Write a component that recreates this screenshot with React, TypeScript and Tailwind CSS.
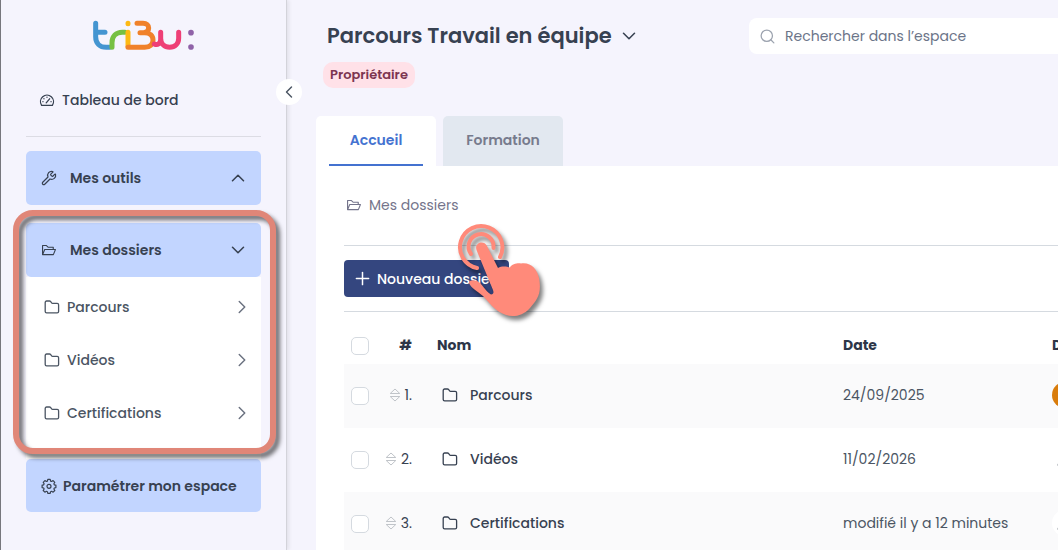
import React, { useState } from 'react';
import { ChevronDown, ChevronLeft, ChevronRight, ChevronUp, Plus, Search, Wrench } from 'lucide-react';
import { AiOutlineFolderOpen } from 'react-icons/ai';
import { BsPersonFill } from 'react-icons/bs';

interface Folder {
  id: number;
  name: string;
  date: string;
  avatar: string;
}

const folders: Folder[] = [
  { id: 1, name: 'Parcours', date: '24/09/2025', avatar: 'bg-[#d97c0b] text-[#d97c0b]' },
  { id: 2, name: 'Vidéos', date: '11/02/2026', avatar: 'bg-white text-[#4b5563]' },
  { id: 3, name: 'Certifications', date: 'modifié il y a 12 minutes', avatar: 'bg-white text-[#4b5563]' },
];

const FolderIcon: React.FC<{ className?: string }> = ({ className }) => (
  <svg viewBox="0 0 16 16" width="16" height="16" fill="none" stroke="currentColor" strokeWidth="1.3" strokeLinejoin="round" className={className}>
    <path d="M1.2 3.4c0-.8.6-1.4 1.4-1.4h2.9c.5 0 .9.2 1.2.6l1.1 1.5c.2.2.4.3.7.3h4.7c.8 0 1.4.6 1.4 1.4v6.600c0 .8-.6 1.400-1.400 1.400H2.600c-.8 0-1.400-.6-1.400-1.400z" />
  </svg>
);

const DashboardIcon = () => (
  <svg viewBox="0 0 16 16" width="16" height="16" fill="none" stroke="currentColor" strokeWidth="1.3" strokeLinecap="round" strokeLinejoin="round">
    <path d="M2.600 13.300A6.500 6.500 0 1 1 13.400 13.300Z" />
    <path d="M7.200 10.800 10.600 6.800M8 5.200v.1M4.900 6.600l.1.1M3.900 9.700h.1M12 9.700h.1" />
  </svg>
);

const GearIcon = () => (
  <svg viewBox="0 0 16 16" width="16" height="16" fill="none" stroke="currentColor" strokeWidth="1.2" strokeLinejoin="round">
    <path d="M6.800 1.400h2.400l.4 1.700 1 .4 1.500-.9 1.700 1.700-.9 1.500.4 1 1.600.4v2.400l-1.600.4-.4 1 .9 1.500-1.700 1.700-1.500-.9-1 .4-.4 1.600H6.800l-.4-1.600-1-.4-1.500.9-1.700-1.700.9-1.500-.4-1-1.600-.4V7.200l1.600-.4.4-1-.9-1.500 1.700-1.700 1.500.9 1-.4z" />
    <circle cx="8" cy="8.300" r="2" />
  </svg>
);

const SortIcon = () => (
  <svg viewBox="0 0 12 14" width="12" height="14" fill="none" stroke="currentColor" strokeLinejoin="round">
    <path d="M6 1 10.8 5.5H1.2zM6 13 1.2 8.5h9.6z" />
  </svg>
);

const Logo = () => (
  <svg viewBox="279 60 306 90" width="102" height="30" fill="none" strokeWidth="15" strokeLinecap="round" strokeLinejoin="round" role="img" aria-label="tribu">
    <path stroke="#4495d1" d="M287 70v40c0 20 12 32 32 32h10M287 97h28" />
    <path stroke="#76c043" d="M336 142v-14c0-19 12-31 31-31h8" />
    <path stroke="#fdb913" d="M384 97v42M384 70v1" />
    <path stroke="#f0812a" d="M384 142h50c15 0 25-9 25-22s-10-22-25-22h-14M411 70h18c11 0 17 6 17 14s-6 13-15 14" />
    <path stroke="#ee3f76" d="M463 132c10 5 19-2 19-14V97M482 97v18c0 16 11 27 27 27s27-11 27-27V97" />
    <path stroke="#8f62a8" strokeWidth="17" d="M573 98v.1M573 141v.1" />
  </svg>
);

const TapHand = () => (
  <svg viewBox="0 0 100 104" width="100" height="104" className="drop-shadow-[3px_4px_2px_rgba(0,0,0,0.5)]" aria-hidden="true">
    <g fill="none" stroke="#ff8a7a" strokeWidth="4" strokeLinecap="round">
      <path d="M27 48A21.2 21.2 0 1 1 50 37" />
      <path d="M21 34A12.5 12.5 0 1 1 43.500 28" />
    </g>
    <path
      fill="#ff8a7a"
      d="M26.500 30C24 22.500 34 19.500 37 26L48 48C52 45.500 57 46.500 60 47.500C62 43.500 68 43 71 43.500C81 42 87 49 89 58C92 74 87 80 80 88C73 96 63 97.500 56 95C50 93 46 90 42 86L33 76C27 71 21 68 19 63C19 60 23 59.500 27 61C32 63 35 71 41 74.500C43.500 74 44 73 43 70Z"
    />
  </svg>
);

const App: React.FC = () => {
  const [tab, setTab] = useState('Accueil');
  const [toolsOpen, setToolsOpen] = useState(false);
  const [selected, setSelected] = useState<number[]>([]);

  const toggle = (id: number) => {
    setSelected(prev => (prev.includes(id) ? prev.filter(s => s !== id) : [...prev, id]));
  };

  const checkboxClass =
    'block size-[18px] appearance-none rounded-[5px] border border-[#d5dae0] bg-white checked:border-[#34467f] checked:bg-[#34467f]';

  return (
    <div className="flex h-screen overflow-hidden border-l border-[#77777d] bg-[#f5f4fd] font-[Poppins,Inter,sans-serif] text-[14px] leading-6 text-[#374151]">
      <aside className="relative z-10 w-[286px] shrink-0 border-r border-[#d3d3da] px-[25px] shadow-[2px_0_4px_rgba(0,0,0,0.08)]">
        <div className="flex justify-center pt-5">
          <Logo />
        </div>
        <button
          type="button"
          aria-label="Réduire le menu"
          className="absolute top-[79px] -right-4 flex size-[26px] items-center justify-center rounded-full bg-white text-[#4b5563]"
        >
          <ChevronLeft size={20} strokeWidth={1.7} />
        </button>

        <nav>
          <a href="#tableau" className="mt-[38px] flex items-center gap-[7px] pl-[13px] font-medium">
            <DashboardIcon />
            Tableau de bord
          </a>
          <hr className="mt-6 mb-[14px] border-[#dcdce4]" />

          <button
            type="button"
            onClick={() => setToolsOpen(!toolsOpen)}
            className="flex h-[54px] w-full items-center rounded-[5px] bg-[#c2d5ff] pr-3 pl-[15px] font-semibold"
          >
            <Wrench size={16} strokeWidth={1.8} />
            <span className="ml-[13px]">Mes outils</span>
            <ChevronUp size={22} strokeWidth={1.7} className="ml-auto" />
          </button>

          <div className="relative mt-[18px]">
            <button type="button" className="flex h-[54px] w-full items-center rounded-[5px] bg-[#c2d5ff] pr-3 pl-[15px] font-semibold">
              <AiOutlineFolderOpen size={16} />
              <span className="ml-[13px]">Mes dossiers</span>
              <ChevronDown size={22} strokeWidth={1.7} className="ml-auto" />
            </button>
            <ul className="bg-white pt-[3px] pb-5 font-medium text-[#4b5563]">
              {folders.map(folder => (
                <li key={folder.id}>
                  <a href={`#dossier-${folder.id}`} className="flex h-[53px] items-center pr-2 pl-[18px]">
                    <FolderIcon />
                    <span className="ml-[7px]">{folder.name}</span>
                    <ChevronRight size={22} strokeWidth={1.6} className="ml-auto text-[#6b7280]" />
                  </a>
                </li>
              ))}
            </ul>
            <div className="pointer-events-none absolute -top-[13px] -right-[15px] bottom-[5px] -left-[13px] rounded-[20px] border-[6px] border-[#e08678] drop-shadow-[4px_4px_2px_rgba(0,0,0,0.55)]" />
          </div>

          <a href="#parametres" className="flex h-[53px] items-center gap-[6px] rounded-[5px] bg-[#c2d5ff] pl-[15px] font-semibold whitespace-nowrap">
            <GearIcon />
            Paramétrer mon espace
          </a>
        </nav>
      </aside>

      <main className="relative min-w-0 flex-1 pl-[29px]">
        <header className="flex items-start justify-between">
          <div className="pt-5">
            <h1>
              <button type="button" className="flex items-center gap-[6px] pl-[11px] text-[21px] leading-8 font-semibold whitespace-nowrap">
                Parcours Travail en équipe
                <ChevronDown size={22} strokeWidth={1.7} />
              </button>
            </h1>
            <span className="mt-[10px] ml-[7px] inline-block rounded-[10px] bg-[#ffe1e8] px-[7px] text-[13px] leading-[26px] font-semibold text-[#7d3550]">
              Propriétaire
            </span>
          </div>
          <label className="mt-[18px] flex h-9 w-[309px] items-center gap-[9px] rounded-l-lg bg-white pl-[10px] text-[#9ca3af]">
            <Search size={17} strokeWidth={1.8} />
            <input
              type="search"
              aria-label="Rechercher"
              placeholder="Rechercher dans l’espace"
              className="min-w-0 flex-1 outline-none placeholder:text-[#6b7488]"
            />
          </label>
        </header>

        <div role="tablist" className="mt-[28px] flex gap-[7px] font-semibold">
          {['Accueil', 'Formation'].map(name => (
            <button
              key={name}
              type="button"
              role="tab"
              aria-selected={tab === name}
              onClick={() => setTab(name)}
              className={`h-[50px] w-[120px] rounded-t-[5px] ${tab === name ? 'bg-white px-[13px] text-[#4472d0]' : 'bg-[#e2e8f0] text-[#777b8d]'}`}
            >
              <span className={`flex h-full items-center justify-center border-b-2 ${tab === name ? 'border-[#4472d0]' : 'border-transparent'}`}>
                {name}
              </span>
            </button>
          ))}
        </div>

        <section className="min-h-[calc(100vh-166px)] bg-white pt-[27px] pl-7">
          <div className="flex items-center gap-[7px] pl-[2px] text-[#74748b]">
            <AiOutlineFolderOpen size={16} />
            Mes dossiers
          </div>
          <div className="mt-7 border-y border-[#d5dae0] py-[14px]">
            <button type="button" className="flex h-[37px] w-[165px] items-center gap-1 rounded-[4px] bg-[#34467f] pl-2 font-medium whitespace-nowrap text-white">
              <Plus size={21} strokeWidth={1.7} />
              Nouveau dossier
            </button>
          </div>

          <table className="w-full table-fixed text-left">
            <thead>
              <tr className="h-[52px] font-bold text-[#2d3648]">
                <th className="w-[37px] pt-4 pl-[7px]">
                  <input type="checkbox" aria-label="Tout sélectionner" className={checkboxClass} />
                </th>
                <th className="w-[31px] pt-[14px] text-right">#</th>
                <th className="pt-[14px] pl-[25px]">Nom</th>
                <th className="w-[209px] pt-[14px]">Date</th>
                <th className="w-[6px] pt-[14px]">D</th>
              </tr>
            </thead>
            <tbody>
              {folders.map(folder => (
                <tr key={folder.id} className="h-16 odd:bg-[#fafafb]">
                  <td className="pl-[7px]">
                    <input
                      type="checkbox"
                      aria-label={folder.name}
                      checked={selected.includes(folder.id)}
                      onChange={() => toggle(folder.id)}
                      className={checkboxClass}
                    />
                  </td>
                  <td className="pb-[3px]">
                    <span className="flex items-center justify-end gap-1">
                      <span className="shrink-0 text-[#c0c4c9]">
                        <SortIcon />
                      </span>
                      {folder.id}.
                    </span>
                  </td>
                  <td className="pb-[3px] pl-[30px]">
                    <span className="flex items-center gap-3 font-medium">
                      <FolderIcon />
                      {folder.name}
                    </span>
                  </td>
                  <td className="pb-[3px] whitespace-nowrap text-[#4b5563]">{folder.date}</td>
                  <td className="pb-[3px]">
                    <span className={`flex size-[26px] items-center justify-center rounded-full ${folder.avatar}`}>
                      <BsPersonFill size={21} />
                    </span>
                  </td>
                </tr>
              ))}
            </tbody>
          </table>
        </section>

        <div className="pointer-events-none absolute top-[220px] left-[163px]">
          <TapHand />
        </div>
      </main>
    </div>
  );
};

export default App;
